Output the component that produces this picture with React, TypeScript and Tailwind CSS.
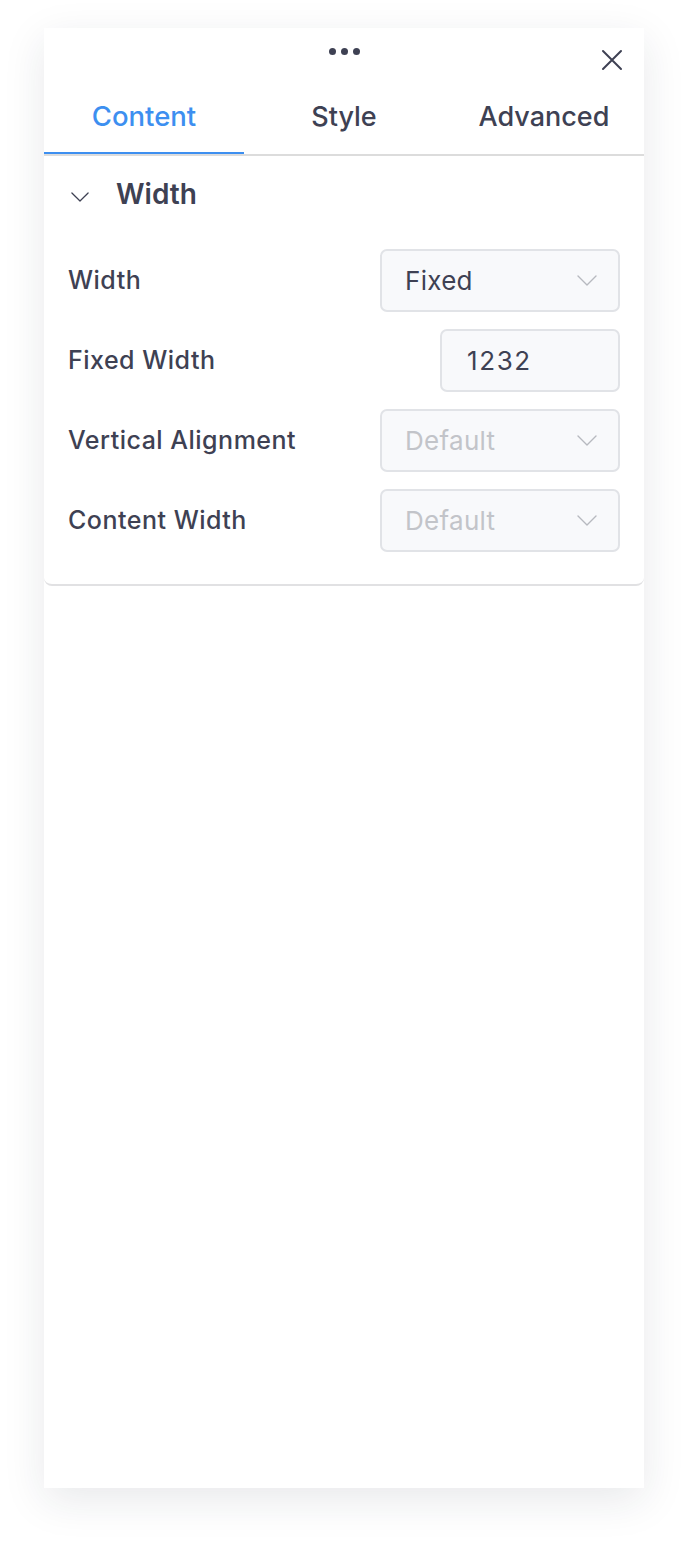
import React from "react";

const font = { fontFamily: 'Inter, "Noto Sans", "Liberation Sans", sans-serif' };

function Chevron({ className }: { className?: string }) {
  return (
    <svg viewBox="0 0 20 11" className={className} fill="none" stroke="currentColor" strokeWidth="1.4" strokeLinecap="round" strokeLinejoin="round">
      <path d="M1 1 L10 10 L19 1" />
    </svg>
  );
}

function Select({ value, muted }: { value: string; muted?: boolean }) {
  return (
    <div className="w-[240px] h-[63px] rounded-[7px] border-2 border-[#e1e3e7] bg-[#f8f9fb] flex items-center justify-between pl-[23px] pr-[21px]">
      <span className={`text-[26px] tracking-[0.3px] ${muted ? "text-[#c2c4c9]" : "text-[#3e4153]"}`}>{value}</span>
      <Chevron className="w-[20px] h-[11px] text-[#b7b9bf]" />
    </div>
  );
}

function Row({ label, children }: { label: string; children: React.ReactNode }) {
  return (
    <div className="h-[63px] flex items-center justify-between">
      <span className="text-[25px] tracking-[0.5px] font-medium text-[#3e4153]">{label}</span>
      {children}
    </div>
  );
}

export default function App() {
  return (
    <div className="min-h-[1550px] bg-white pt-[28px] pl-[44px]" style={font}>
      <div className="relative w-[600px] h-[1460px] bg-white shadow-[0_12px_40px_rgba(30,40,60,0.10)] flex flex-col">
        <div className="h-[48px] flex justify-center pt-[20px]">
          <div className="flex gap-[5px]">
            <span className="w-[7px] h-[7px] rounded-full bg-[#3e4153]" />
            <span className="w-[7px] h-[7px] rounded-full bg-[#3e4153]" />
            <span className="w-[7px] h-[7px] rounded-full bg-[#3e4153]" />
          </div>
        </div>
        <button className="absolute right-[20px] top-[20px] w-[24px] h-[24px] text-[#3e4153]">
          <svg viewBox="0 0 24 24" className="w-[24px] h-[24px]" fill="none" stroke="currentColor" strokeWidth="2" strokeLinecap="round">
            <path d="M3 3 L21 21 M21 3 L3 21" />
          </svg>
        </button>
        <div className="flex border-b-2 border-[#dcdcdc]">
          <div className="w-[200px] h-[78px] pt-[5px] flex items-center justify-center text-[27.5px] font-medium text-[#3d8ff0] border-b-2 border-[#3d8ff0] -mb-[2px]">Content</div>
          <div className="w-[200px] h-[78px] pt-[5px] flex items-center justify-center text-[27px] font-medium text-[#3e4153]">Style</div>
          <div className="w-[200px] h-[78px] pt-[5px] flex items-center justify-center text-[27px] font-medium text-[#3e4153]">Advanced</div>
        </div>
        <div className="border-b-2 border-[#e1e1e3] rounded-b-[8px]">
          <div className="h-[76px] flex items-center pl-[27px]">
            <Chevron className="w-[18px] h-[10px] text-[#3e4153] mt-[6px]" />
            <span className="ml-[27px] text-[28px] font-semibold text-[#3e4153]">Width</span>
          </div>
          <div className="pl-[24px] pr-[24px] pt-[17px] pb-[32px] flex flex-col gap-[17px]">
            <Row label="Width"><Select value="Fixed" /></Row>
            <Row label="Fixed Width">
              <div className="w-[180px] h-[63px] rounded-[7px] border-2 border-[#e1e3e7] bg-[#f8f9fb] flex items-center pl-[25px] text-[26px] tracking-[1.6px] text-[#3e4153]">1232</div>
            </Row>
            <Row label="Vertical Alignment"><Select value="Default" muted /></Row>
            <Row label="Content Width"><Select value="Default" muted /></Row>
          </div>
        </div>
      </div>
    </div>
  );
}
